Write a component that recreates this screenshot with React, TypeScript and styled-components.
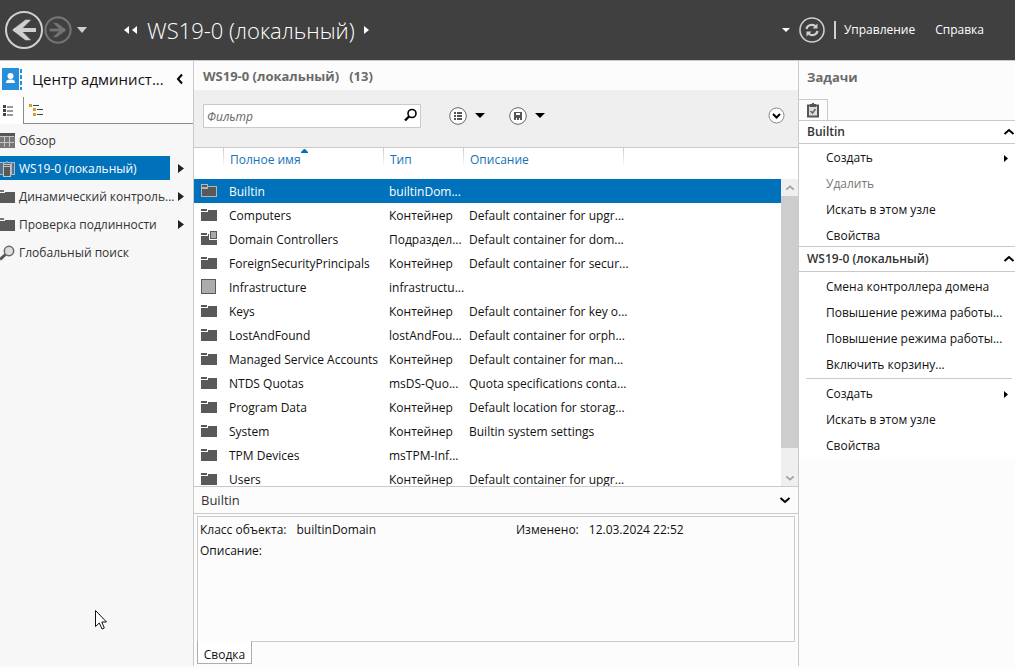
import React from "react";
import styled, { createGlobalStyle, css } from "styled-components";

const line = "#cacaca";
const blue = "#0072bc";
const panel = "#fcfcfc";

const Global = createGlobalStyle`
  *, *::before, *::after { box-sizing: border-box; }
  body { margin: 0; background: ${panel}; color: #1a1a1a; font: 12px/20px "Open Sans", "Noto Sans", sans-serif; }
  button, input { font: inherit; color: inherit; margin: 0; padding: 0; border: 0; background: none; }
  h1, h2, h3, ul, dl, dd { margin: 0; padding: 0; font-weight: 400; }
  ul { list-style: none; }
  svg { display: block; flex: none; }
`;

const Shell = styled.div`
  height: 100vh;
  display: flex;
  flex-direction: column;
  padding-bottom: 3px;
`;

const TopBar = styled.header`
  flex: none;
  height: 60px;
  display: flex;
  align-items: center;
  padding-left: 4px;
  padding-right: 31px;
  background: #404040;
  color: #fff;
`;

const IconButton = styled.button`
  display: flex;
  align-items: center;
  justify-content: center;
  flex: none;
`;

const History = styled.div`
  display: flex;
  align-items: center;
  width: 120px;
`;

const Crumb = styled.div`
  display: flex;
  align-items: center;
  gap: 9px;
  flex: 1;
`;

const CrumbTitle = styled.h1`
  font-size: 22px;
  line-height: 32px;
  font-weight: 300;
  white-space: nowrap;
`;

const TopTools = styled.div`
  display: flex;
  align-items: center;
  gap: 8px;
`;

const TopDivider = styled.span`
  width: 2px;
  height: 18px;
  background: #cfcfcf;
`;

const TopMenu = styled.nav`
  display: flex;
  gap: 20px;
`;

const Body = styled.div`
  flex: 1;
  min-height: 0;
  display: grid;
  grid-template-columns: 194px minmax(0, 1fr) 217px;
  border-top: 1px solid ${line};
`;

const Sidebar = styled.aside`
  display: flex;
  flex-direction: column;
  background: #f7f7f7;
  border-right: 1px solid ${line};
`;

const SidebarHead = styled.div`
  height: 36px;
  display: flex;
  align-items: center;
  gap: 9px;
  padding: 0 7px 0 2px;
  background: ${panel};
`;

const SidebarTitle = styled.h2`
  flex: 1;
  font-size: 15px;
  color: #111;
  white-space: nowrap;
`;

const ViewTabs = styled.div`
  height: 27px;
  display: flex;
  background: ${panel};
`;

const ViewTab = styled.button<{ $active?: boolean }>`
  display: flex;
  align-items: center;
  ${(p) =>
    p.$active
      ? css`
          width: 23px;
          padding-left: 3px;
          background: #fff;
        `
      : css`
          flex: 1;
          padding-left: 5px;
          border-left: 1px solid #8a8a8a;
          border-bottom: 1px solid #8a8a8a;
        `}
`;

const NavList = styled.ul`
  display: flex;
  flex-direction: column;
  gap: 4px;
  padding-top: 4px;
`;

const NavRow = styled.li`
  display: flex;
  align-items: center;
  height: 24px;
`;

const NavButton = styled.button<{ $selected?: boolean }>`
  display: flex;
  align-items: center;
  gap: 4px;
  width: 170px;
  height: 24px;
  padding-top: 2px;
  margin-right: 8px;
  white-space: nowrap;
  color: ${(p) => (p.$selected ? "#fff" : "#333")};
  background: ${(p) => (p.$selected ? blue : "transparent")};
`;

const Main = styled.main`
  display: flex;
  flex-direction: column;
  min-height: 0;
  background: ${panel};
`;

const PaneTitle = styled.h2`
  display: flex;
  gap: 10px;
  height: 29px;
  line-height: 30px;
  padding-left: 9px;
  font-size: 13px;
  font-weight: 700;
  color: #6a6a6a;
`;

const Toolbar = styled.div`
  height: 58px;
  display: flex;
  align-items: center;
  padding: 0 13px 6px 9px;
  background: #efefef;
  border-bottom: 1px solid ${line};
`;

const Filter = styled.label`
  width: 218px;
  height: 24px;
  display: flex;
  align-items: center;
  padding: 0 2px 0 3px;
  margin-right: 28px;
  background: #fff;
  border: 1px solid ${line};
`;

const FilterInput = styled.input`
  flex: 1;
  min-width: 0;
  padding-top: 2px;
  outline: 0;
  &::placeholder {
    color: #666;
    font-style: italic;
    opacity: 1;
  }
`;

const ToolButton = styled(IconButton)`
  gap: 8px;
  margin-right: 24px;
`;

const ExpandButton = styled(IconButton)`
  margin-left: auto;
`;

const ListPane = styled.div`
  flex: 1 1 0;
  min-height: 0;
  overflow: hidden;
  display: grid;
  grid-template-columns: minmax(0, 1fr) 17px;
  grid-template-rows: minmax(0, 1fr);
  background: #fff;
`;

const TableClip = styled.div`
  overflow: hidden;
`;

const ListTable = styled.table`
  width: 100%;
  table-layout: fixed;
  border-collapse: collapse;
  white-space: nowrap;
  color: #111;
`;

const Head = styled.th`
  height: 31px;
  padding: 0 0 7px 6px;
  text-align: left;
  font-weight: 400;
  color: #1373b9;
  background: linear-gradient(${line}, #fff) no-repeat right top / 1px 20px;
  &:last-child {
    background: none;
  }
`;

const HeadLabel = styled.span`
  position: relative;
  display: block;
`;

const SortMark = styled.svg`
  position: absolute;
  left: 71px;
  top: -1px;
`;

const Row = styled.tr<{ $selected?: boolean }>`
  ${(p) =>
    p.$selected &&
    css`
      background: ${blue};
      color: #fff;
    `}
`;

const Cell = styled.td`
  height: 24px;
  padding: 2px 0 0 5px;
`;

const IconCell = styled.td`
  height: 24px;
  padding: 0 0 0 7px;
`;

const Scrollbar = styled.div`
  display: flex;
  flex-direction: column;
  margin-top: 31px;
  background: #efefef;
`;

const ScrollButton = styled(IconButton)`
  height: 17px;
`;

const ScrollTrack = styled.div`
  flex: 1;
  padding-bottom: 21px;
`;

const ScrollThumb = styled.div`
  height: 100%;
  background: #cdcdcd;
`;

const PreviewHead = styled.div`
  flex: none;
  height: 28px;
  display: flex;
  align-items: center;
  justify-content: space-between;
  padding: 0 7px;
  border-top: 1px solid ${line};
  border-bottom: 1px solid ${line};
`;

const PreviewTitle = styled.h3`
  font-size: 13px;
  color: #333;
`;

const Preview = styled.section`
  flex: none;
  padding: 2px 3px;
`;

const PreviewBox = styled.dl`
  height: 126px;
  display: grid;
  grid-template-columns: 316px 1fr;
  grid-auto-rows: 21px;
  padding: 3px 2px;
  border: 1px solid ${line};
  color: #111;
`;

const Field = styled.div`
  display: flex;
  gap: 10px;
  white-space: nowrap;
`;

const PreviewTab = styled.button`
  display: block;
  position: relative;
  margin-top: -1px;
  height: 23px;
  width: 55px;
  padding-top: 4px;
  background: #fff;
  border: 1px solid #acacac;
  border-top: 0;
  color: #111;
`;

const Tasks = styled.aside`
  border-left: 1px solid ${line};
  background: ${panel};
`;

const TasksTitle = styled.h2`
  height: 38px;
  line-height: 32px;
  padding-left: 8px;
  font-size: 13px;
  font-weight: 700;
  color: #6a6a6a;
`;

const TasksTab = styled.button`
  display: flex;
  align-items: center;
  height: 21px;
  width: 29px;
  padding-left: 8px;
  border-top: 1px solid ${line};
  border-right: 1px solid ${line};
`;

const TaskHead = styled.button<{ $tall?: boolean }>`
  display: flex;
  align-items: center;
  justify-content: space-between;
  width: 100%;
  height: ${(p) => (p.$tall ? 26 : 24)}px;
  padding: 0 0 0 8px;
  background: #fff;
  border-top: 1px solid ${line};
  border-bottom: 1px solid ${line};
  font-weight: 600;
  color: #333;
`;

const TaskList = styled.ul<{ $tight?: boolean }>`
  display: flex;
  flex-direction: column;
  gap: 6px;
  padding: ${(p) => (p.$tight ? 4 : 5)}px 7px 0 27px;
  background: #fff;
`;

const TaskEnd = styled.hr`
  height: 1px;
  margin: 3px 3px 0 7px;
  border: 0;
  background: ${line};
`;

const TaskGroup = styled.section`
  background: #fff;
  &:last-child {
    padding-bottom: 3px;
  }
`;

const TaskButton = styled.button`
  width: 100%;
  display: flex;
  align-items: center;
  justify-content: space-between;
  white-space: nowrap;
  color: #111;
  &:disabled {
    color: #777;
  }
`;

const Pointer = styled.svg`
  position: absolute;
  left: 95px;
  top: 610px;
  pointer-events: none;
`;

const Down = ({ w = 10, h = 5, fill = "#000" }: { w?: number; h?: number; fill?: string }) => (
  <svg width={w} height={h} viewBox="0 0 10 5" preserveAspectRatio="none"><path d="M0 0H10L5 5Z" fill={fill} /></svg>
);

const Right = ({ w = 5, h = 9, fill = "#222" }: { w?: number; h?: number; fill?: string }) => (
  <svg width={w} height={h} viewBox="0 0 5 10" preserveAspectRatio="none"><path d="M0 0L5 5L0 10Z" fill={fill} /></svg>
);

const Chevron = ({ turn = 0, color = "#000", size = 12 }: { turn?: number; color?: string; size?: number }) => (
  <svg width={size} height={size} viewBox="0 0 12 12">
    <path d="M1.5 4L6 8L10.5 4" fill="none" stroke={color} strokeWidth="2" transform={`rotate(${turn} 6 6)`} />
  </svg>
);

const Arrow = ({ size, color, forward }: { size: number; color: string; forward?: boolean }) => (
  <svg width={size} height={size} viewBox="0 0 40 40">
    <g fill="none" stroke={color} transform={forward ? "rotate(180 20 20)" : undefined}>
      <circle cx="20" cy="20" r="18" strokeWidth={forward ? 3 : 2} />
      <path d="M10 20H32" strokeWidth="4" />
      <path d="M21.5 10H26.500L16.500 20L26.500 30H21.500L8.500 20Z" fill={color} strokeWidth="0.5" />
    </g>
  </svg>
);

const Folder = ({ light, badge }: { light?: boolean; badge?: boolean }) => (
  <svg width="16" height="16" viewBox="0 0 16 16" shapeRendering="crispEdges">
    {light ? (
      <g fill="#595959" stroke="#b5b5b5">
        <path d="M0.5 5.5H6.500V3.500H15.500V13.500H0.500Z" />
        <path d="M0.500 1.500H6.500V4.500H0.500Z" />
      </g>
    ) : (
      <g fill="#595959">
        <path d="M0 5H7V3H16V14H0Z" />
        <path d="M0 2H6V4H0Z" />
      </g>
    )}
    {badge && (
      <g>
        <rect x="8" y="0" width="8" height="9" fill="#fff" />
        <rect x="9.5" y="0.5" width="6" height="7" fill="#aaa" stroke="#595959" />
        <path d="M8 9H16V10H8Z" fill="#595959" />
      </g>
    )}
  </svg>
);

const Square = () => (
  <svg width="16" height="16" viewBox="0 0 16 16" shapeRendering="crispEdges">
    <rect x="0.5" y="0.5" width="14" height="14" fill="#acacac" stroke="#595959" />
  </svg>
);

const navIcons: Record<string, React.ReactNode> = {
  overview: (
    <svg width="15" height="16" viewBox="0 0 15 16" shapeRendering="crispEdges">
      <path d="M0 0H15V15H0Z" fill="#777" />
      <path d="M0 0H15V3H0Z" fill="#555" />
      <path d="M0 3.5H14M0 9.5H14M4.5 4V14M9.5 4V14" stroke="#c4c4c4" fill="none" />
    </svg>
  ),
  server: (
    <svg width="15" height="16" viewBox="0 0 15 16" shapeRendering="crispEdges">
      <path d="M0 1.5H14.5V13.5H0" fill="#54708a" stroke="#a9b9c6" />
      <path d="M3.5 2V13M11.5 2V13" stroke="#a9b9c6" />
      <path d="M3.5 3.5H10.5V15.5H3.5Z" fill="#595959" stroke="#c4c4c4" />
      <path d="M4 5.5H10" stroke="#c4c4c4" />
      <path d="M6 0H8V2H6Z" fill="#43b0f0" />
    </svg>
  ),
  folder: (
    <svg width="15" height="16" viewBox="0 0 15 16" shapeRendering="crispEdges">
      <path d="M0 4H5V3H15V14H0Z" fill="#595959" />
      <path d="M0 1H4V3H0Z" fill="#777" />
    </svg>
  ),
  search: (
    <svg width="15" height="16" viewBox="0 0 15 16">
      <path d="M5.5 9.5L0 14.5" stroke="#555" strokeWidth="3" />
      <circle cx="9" cy="6" r="4.7" fill="#ddd" stroke="#666" strokeWidth="1.5" />
    </svg>
  ),
};

const navItems = [
  { icon: "overview", label: "Обзор" },
  { icon: "server", label: "WS19-0 (локальный)", selected: true, more: true },
  { icon: "folder", label: "Динамический контроль...", more: true },
  { icon: "folder", label: "Проверка подлинности", more: true },
  { icon: "search", label: "Глобальный поиск" },
];

const rows: [string, string, string][] = [
  ["Builtin", "builtinDom...", ""],
  ["Computers", "Контейнер", "Default container for upgr..."],
  ["Domain Controllers", "Подраздел...", "Default container for dom..."],
  ["ForeignSecurityPrincipals", "Контейнер", "Default container for secur..."],
  ["Infrastructure", "infrastructu...", ""],
  ["Keys", "Контейнер", "Default container for key o..."],
  ["LostAndFound", "lostAndFou...", "Default container for orph..."],
  ["Managed Service Accounts", "Контейнер", "Default container for man..."],
  ["NTDS Quotas", "msDS-Quo...", "Quota specifications conta..."],
  ["Program Data", "Контейнер", "Default location for storag..."],
  ["System", "Контейнер", "Builtin system settings"],
  ["TPM Devices", "msTPM-Inf...", ""],
  ["Users", "Контейнер", "Default container for upgr..."],
];

type Task = { label: string; more?: boolean; disabled?: boolean };

const builtinTasks: Task[] = [
  { label: "Создать", more: true },
  { label: "Удалить", disabled: true },
  { label: "Искать в этом узле" },
  { label: "Свойства" },
];
const domainTasks: Task[] = [
  { label: "Смена контроллера домена" },
  { label: "Повышение режима работы..." },
  { label: "Повышение режима работы..." },
  { label: "Включить корзину..." },
];
const nodeTasks: Task[] = [
  { label: "Создать", more: true },
  { label: "Искать в этом узле" },
  { label: "Свойства" },
];

const TaskItems = ({ items, tight }: { items: Task[]; tight?: boolean }) => (
  <TaskList $tight={tight}>
    {items.map((t, i) => (
      <li key={i}>
        <TaskButton disabled={t.disabled}>
          {t.label}
          {t.more && <Right w={4} h={7} fill="#000" />}
        </TaskButton>
      </li>
    ))}
  </TaskList>
);

export default function App() {
  return (
    <>
      <Global />
      <Shell>
        <TopBar>
          <History>
            <IconButton aria-label="Назад"><Arrow size={40} color="#d0d0d0" /></IconButton>
            <IconButton aria-label="Вперёд"><Arrow size={28} color="#737373" forward /></IconButton>
            <IconButton aria-label="Журнал">
              <svg width="20" height="6" viewBox="0 0 20 6"><path d="M5 0H15L10 6Z" fill="#cfcfcf" /></svg>
            </IconButton>
          </History>
          <Crumb>
            <IconButton aria-label="Начало пути">
              <svg width="14" height="8" viewBox="0 0 14 8"><path d="M5 0V8L0 4ZM13 0V8L8 4Z" fill="#fff" /></svg>
            </IconButton>
            <CrumbTitle>WS19-0 (локальный)</CrumbTitle>
            <IconButton aria-label="Далее"><Right w={5} h={8} fill="#fff" /></IconButton>
          </Crumb>
          <TopTools>
            <IconButton aria-label="Путь"><Down w={8} h={4} fill="#fff" /></IconButton>
            <IconButton aria-label="Обновить">
              <svg width="28" height="28" viewBox="0 0 28 28" fill="none" stroke="#cfcfcf">
                <circle cx="14" cy="14" r="12" strokeWidth="1.6" />
                <path d="M8.5 13C9 9.5 13.5 7.5 17.5 10.2M19.5 15C19 18.5 14.5 20.5 10.5 17.8" strokeWidth="2.2" />
                <path d="M19.5 7.5V12.5H14.5Z M8.5 20.5V15.5H13.5Z" fill="#cfcfcf" stroke="none" />
              </svg>
            </IconButton>
            <TopDivider />
            <TopMenu>
              <button>Управление</button>
              <button>Справка</button>
            </TopMenu>
          </TopTools>
        </TopBar>

        <Body>
          <Sidebar>
            <SidebarHead>
              <svg width="21" height="22" viewBox="0 0 21 22">
                <path d="M0 0H17V22H0Z" fill="#258fdb" />
                <path d="M18 1H20V5H18ZM18 7H20V11H18ZM18 13H20V17H18ZM18 19H20V22H18Z" fill="#258fdb" />
                <circle cx="8.5" cy="8" r="3" fill="#fff" />
                <path d="M4 15C4 12 6 11 8.5 11.5C11 11 13 12 13 15Z" fill="#fff" />
              </svg>
              <SidebarTitle>Центр админист...</SidebarTitle>
              <IconButton aria-label="Свернуть"><Chevron turn={90} /></IconButton>
            </SidebarHead>
            <ViewTabs>
              <ViewTab $active aria-label="Список">
                <svg width="11" height="11" viewBox="0 0 11 11" shapeRendering="crispEdges">
                  <path d="M0 0H3V3H0ZM0 4H3V7H0ZM0 8H3V11H0Z" fill="#444" />
                  <path d="M4 1H10V3H4ZM4 5H10V7H4ZM4 9H10V11H4Z" fill="#999" />
                </svg>
              </ViewTab>
              <ViewTab aria-label="Дерево">
                <svg width="15" height="12" viewBox="0 0 15 12" shapeRendering="crispEdges">
                  <path d="M0 0H3V3H0ZM4 4H7V7H4ZM4 9H7V12H4Z" fill="#d99c2b" />
                  <path d="M4 1.5H10M8 5.5H14M8 10.5H14" stroke="#444" />
                </svg>
              </ViewTab>
            </ViewTabs>
            <NavList>
              {navItems.map((n) => (
                <NavRow key={n.label}>
                  <NavButton $selected={n.selected}>
                    {navIcons[n.icon]}
                    {n.label}
                  </NavButton>
                  {n.more && <IconButton aria-label="Развернуть"><Right w={6} h={9} /></IconButton>}
                </NavRow>
              ))}
            </NavList>
          </Sidebar>

          <Main>
            <PaneTitle>
              <span>WS19-0 (локальный)</span>
              <span>(13)</span>
            </PaneTitle>
            <Toolbar>
              <Filter>
                <FilterInput type="text" placeholder="Фильтр" aria-label="Фильтр" />
                <svg width="15" height="15" viewBox="0 0 15 15" fill="none" stroke="#000">
                  <circle cx="9" cy="5.5" r="4" strokeWidth="1.6" />
                  <path d="M6 8.5L2 12.5" strokeWidth="2.4" />
                </svg>
              </Filter>
              <ToolButton aria-label="Вид">
                <svg width="18" height="18" viewBox="0 0 18 18">
                  <circle cx="9" cy="9" r="8.3" fill="#fff" stroke="#666" />
                  <path d="M5 5H7V7H5ZM5 8H7V10H5ZM5 11H7V13H5ZM8 5H13V7H8ZM8 8H13V10H8ZM8 11H13V13H8Z" fill="#555" />
                </svg>
                <Down />
              </ToolButton>
              <ToolButton aria-label="Сохранить">
                <svg width="18" height="18" viewBox="0 0 18 18">
                  <circle cx="9" cy="9" r="8.3" fill="#fff" stroke="#666" />
                  <path d="M5 5H13V13H5Z" fill="#555" />
                  <path d="M7 6H11V8H7ZM7 11H8V13H7ZM10 11H11V13H10Z" fill="#fff" />
                </svg>
                <Down />
              </ToolButton>
              <ExpandButton aria-label="Развернуть">
                <svg width="17" height="17" viewBox="0 0 17 17">
                  <circle cx="8.5" cy="8.5" r="7.5" fill="#fff" stroke="#888" />
                  <path d="M5 7L8.5 10.5L12 7" fill="none" stroke="#000" strokeWidth="2" />
                </svg>
              </ExpandButton>
            </Toolbar>
            <ListPane>
              <TableClip>
                <ListTable>
                  <colgroup>
                    <col width="30" />
                    <col width="160" />
                    <col width="80" />
                    <col width="160" />
                    <col />
                  </colgroup>
                  <thead>
                    <tr>
                      <Head scope="col" />
                      <Head scope="col">
                        <HeadLabel>
                          Полное имя
                          <SortMark width="7" height="4" viewBox="0 0 7 4"><path d="M0 4V3L3 0H4L7 3V4Z" fill={blue} /></SortMark>
                        </HeadLabel>
                      </Head>
                      <Head scope="col">Тип</Head>
                      <Head scope="col">Описание</Head>
                      <Head />
                    </tr>
                  </thead>
                  <tbody>
                    {rows.map(([name, type, desc], i) => (
                      <Row key={name} $selected={i === 0}>
                        <IconCell>
                          {name === "Infrastructure" ? <Square /> : <Folder light={i === 0} badge={name === "Domain Controllers"} />}
                        </IconCell>
                        <Cell>{name}</Cell>
                        <Cell>{type}</Cell>
                        <Cell colSpan={2}>{desc}</Cell>
                      </Row>
                    ))}
                  </tbody>
                </ListTable>
              </TableClip>
              <Scrollbar>
                <ScrollButton aria-label="Вверх"><Chevron turn={180} size={10} color="#a0a0a0" /></ScrollButton>
                <ScrollTrack><ScrollThumb /></ScrollTrack>
                <ScrollButton aria-label="Вниз"><Chevron size={10} color="#a0a0a0" /></ScrollButton>
              </Scrollbar>
            </ListPane>
            <PreviewHead>
              <PreviewTitle>Builtin</PreviewTitle>
              <IconButton aria-label="Свернуть сводку"><Chevron /></IconButton>
            </PreviewHead>
            <Preview>
              <PreviewBox>
                <Field><dt>Класс объекта:</dt><dd>builtinDomain</dd></Field>
                <Field><dt>Изменено:</dt><dd>12.03.2024 22:52</dd></Field>
                <Field><dt>Описание:</dt><dd /></Field>
              </PreviewBox>
              <PreviewTab>Сводка</PreviewTab>
            </Preview>
          </Main>

          <Tasks>
            <TasksTitle>Задачи</TasksTitle>
            <TasksTab aria-label="Задачи">
              <svg width="12" height="15" viewBox="0 0 12 15">
                <path d="M1 2.5H11V13.5H1Z" fill="#ddd" stroke="#555" strokeWidth="2" />
                <path d="M3 1H5V0H7V1H9V4H3Z" fill="#555" />
                <path d="M3.5 8L5.5 10L8.5 6" fill="none" stroke="#666" strokeWidth="1.5" />
              </svg>
            </TasksTab>
            <TaskGroup>
              <TaskHead>Builtin<Chevron turn={180} /></TaskHead>
              <TaskItems items={builtinTasks} tight />
            </TaskGroup>
            <TaskGroup>
              <TaskHead $tall>WS19-0 (локальный)<Chevron turn={180} /></TaskHead>
              <TaskItems items={domainTasks} />
              <TaskEnd />
              <TaskItems items={nodeTasks} />
            </TaskGroup>
          </Tasks>
        </Body>
      </Shell>
      <Pointer width="12" height="20" viewBox="0 0 12 20">
        <path d="M0.5 0.5V16.5L4.3 13L7 19L9.3 18L6.8 12H11.5Z" fill="#fff" stroke="#111" />
      </Pointer>
    </>
  );
}
